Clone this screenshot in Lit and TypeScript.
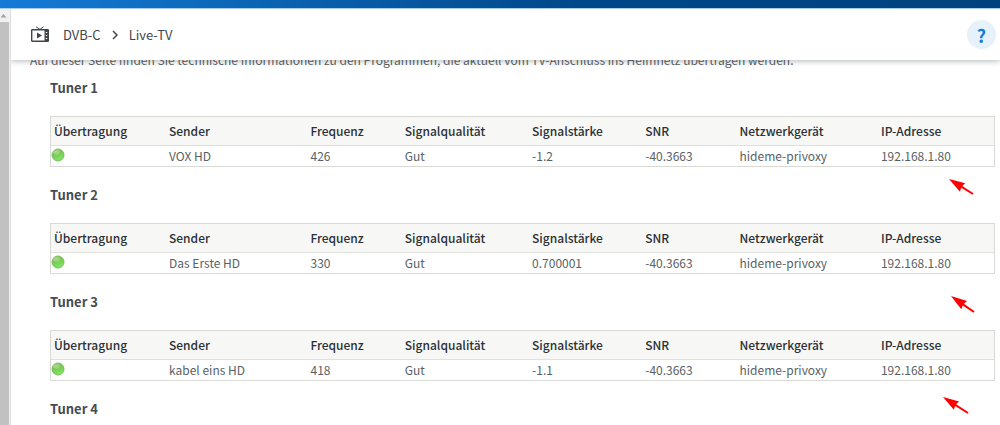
import { LitElement, html, css, svg } from "lit";
import { customElement, property } from "lit/decorators.js";
import { styleMap } from "lit/directives/style-map.js";

interface Tuner {
  name: string;
  row?: string[];
  arrow?: { x: number; y: number; dx: number; dy: number };
}

const COLUMNS: [string, number][] = [
  ["Übertragung", 12.2],
  ["Sender", 15],
  ["Frequenz", 10],
  ["Signalqualität", 13.5],
  ["Signalstärke", 12],
  ["SNR", 10],
  ["Netzwerkgerät", 15],
  ["IP-Adresse", 12.3],
];

const TUNERS: Tuner[] = [
  {
    name: "Tuner 1",
    row: ["VOX HD", "426", "Gut", "-1.2", "-40.3663", "hideme-privoxy", "192.168.1.80"],
    arrow: { x: 46, y: 63, dx: 24, dy: 15 },
  },
  {
    name: "Tuner 2",
    row: ["Das Erste HD", "330", "Gut", "0.700001", "-40.3663", "hideme-privoxy", "192.168.1.80"],
    arrow: { x: 44, y: 73, dx: 23, dy: 16 },
  },
  {
    name: "Tuner 3",
    row: ["kabel eins HD", "418", "Gut", "-1.1", "-40.3663", "hideme-privoxy", "192.168.1.80"],
    arrow: { x: 52, y: 67, dx: 25, dy: 16 },
  },
  { name: "Tuner 4" },
];

@customElement("tuner-section")
class TunerSection extends LitElement {
  @property({ attribute: false }) tuner!: Tuner;

  static styles = css`
    :host {
      display: block;
    }
    .title {
      margin: 0;
      font-size: 13px;
      line-height: 20px;
      font-weight: 700;
      color: #454c52;
    }
    .wrap {
      position: relative;
      margin: 18px 0;
    }
    .grid {
      width: 100%;
      table-layout: fixed;
      border-collapse: separate;
      border-spacing: 0;
      border: 1px solid #d9dad6;
      box-sizing: border-box;
    }
    th,
    td {
      padding: 0 3px;
      text-align: left;
      white-space: nowrap;
      font-size: 12px;
    }
    th {
      height: 28px;
      background: #f7f7f5;
      border-bottom: 1px solid #dfe0dc;
      font-weight: 500;
      color: #2b3136;
      line-height: 20px;
    }
    td {
      height: 20px;
      line-height: 20px;
      color: #5a5f66;
    }
    .state {
      padding: 0;
    }
    .led {
      display: block;
      width: 14px;
      height: 14px;
      margin-bottom: 3px;
    }
    .arrow {
      position: absolute;
      overflow: visible;
    }
  `;

  private arrow() {
    const a = this.tuner.arrow;
    if (!a) return null;
    const angle = (Math.atan2(a.dy, a.dx) * 180) / Math.PI;
    const length = Math.hypot(a.dx, a.dy);
    return html`<svg
      class="arrow"
      width=${a.dx}
      height=${a.dy}
      style=${styleMap({ right: `${a.x - a.dx}px`, top: `${a.y}px` })}
      aria-hidden="true"
    >
      ${svg`<g transform="rotate(${angle})" fill="#f00">
        <path d="M0 0L16 -5L15 -1H${length}V1H15L16 5Z" />
      </g>`}
    </svg>`;
  }

  render() {
    const t = this.tuner;
    return html`
      <h2 class="title" id="title">${t.name}</h2>
      ${t.row
        ? html`<div class="wrap">
            <table class="grid" aria-labelledby="title">
              <colgroup>
                ${COLUMNS.map(([, w]) => html`<col style=${styleMap({ width: `${w}%` })} />`)}
              </colgroup>
              <thead>
                <tr>
                  ${COLUMNS.map(([label]) => html`<th scope="col">${label}</th>`)}
                </tr>
              </thead>
              <tbody>
                <tr>
                  <td class="state">
                    <svg class="led" viewBox="0 0 14 14" role="img" aria-label="aktiv">
                      <defs>
                        <linearGradient id="g" x1="0" y1="0" x2="0.4" y2="1">
                          <stop offset="0" stop-color="#b5d69b" />
                          <stop offset="0.45" stop-color="#78c552" />
                          <stop offset="1" stop-color="#7de765" />
                        </linearGradient>
                      </defs>
                      <circle cx="7" cy="7" r="6" fill="url(#g)" stroke="#79bd5b" />
                      <ellipse cx="5.6" cy="4.6" rx="3.2" ry="2.2" fill="#d3e8bd" opacity="0.4" />
                    </svg>
                  </td>
                  ${t.row.map((v) => html`<td>${v}</td>`)}
                </tr>
              </tbody>
            </table>
            ${this.arrow()}
          </div>`
        : null}
    `;
  }
}

@customElement("app-root")
class AppRoot extends LitElement {
  static styles = css`
    :host {
      display: flex;
      flex-direction: column;
      height: 100vh;
      overflow: hidden;
      background: #fff;
      color: #3f464c;
      font-family: "Noto Sans CJK SC", "Noto Sans", sans-serif;
    }
    .brand {
      flex: none;
      height: 8px;
      background: linear-gradient(90deg, #147bd6, #00488a 58%, #00427e);
      border-bottom: 1px solid #a9cbe8;
    }
    .body {
      flex: 1;
      display: flex;
      min-height: 0;
    }
    .scroll {
      flex: none;
      width: 9px;
      display: flex;
      flex-direction: column;
      background: #f1f1f1;
      border-right: 1px solid #f1f1f1;
    }
    .up {
      flex: none;
      width: 9px;
      height: 13px;
    }
    .thumb {
      flex: 1;
      background: #c1c1c1;
    }
    .page {
      flex: 1;
      min-width: 0;
      overflow: hidden;
      display: flex;
      flex-direction: column;
      border-left: 1px solid #dedede;
    }
    .head {
      flex: none;
      position: relative;
      z-index: 1;
      display: flex;
      align-items: center;
      height: 51px;
      padding: 0 4px 0 19px;
      background: #fff;
      box-shadow: 0 1px 6px rgba(60, 70, 75, 0.4);
    }
    .tv {
      width: 20px;
      height: 18px;
    }
    .crumbs {
      flex: 1;
      display: flex;
      align-items: center;
      gap: 11px;
      margin-left: 13px;
      font-size: 13px;
      line-height: 20px;
    }
    .crumbs a {
      color: inherit;
      text-decoration: none;
    }
    .chev {
      width: 6px;
      height: 10px;
    }
    .help {
      width: 29px;
      height: 29px;
      padding: 0;
      border: 0;
      border-radius: 50%;
      background: #e6f1fa;
      color: #147bd6;
      font: 700 18px/26px "Noto Sans CJK SC", sans-serif;
    }
    .content {
      flex: 1;
      min-height: 0;
      overflow: hidden;
      padding: 0 5px 0 19px;
    }
    .intro {
      margin: -10px 0 0;
      font-size: 12px;
      line-height: 20px;
      color: #5a5f66;
    }
    .tuners {
      margin: 8px 0 0 20px;
    }
  `;

  render() {
    return html`
      <div class="brand"></div>
      <div class="body">
        <div class="scroll" aria-hidden="true">
          <svg class="up" viewBox="0 0 9 13"><path d="M0.5 8.5L3.5 5L6.5 8.5Z" fill="#a3a3a3" /></svg>
          <div class="thumb"></div>
        </div>
        <div class="page">
          <header class="head">
            <svg class="tv" viewBox="0 0 20 18" fill="none" stroke="#3f464c" aria-hidden="true">
              <path d="M6 0.8L10 3.4L13.5 0.8" stroke-width="1" />
              <rect x="1.7" y="3.7" width="16.6" height="11.6" rx="0.6" stroke-width="1.4" />
              <path d="M14.5 3.5H18.5V15.5H14.5Z" fill="#3f464c" stroke="none" />
              <path d="M7 6.5L12 9.5L7 12.5Z" fill="#3f464c" stroke="none" />
              <path d="M15.8 6.5H17.2M15.8 9.5H17.2M15.8 12.5H17.2" stroke="#fff" stroke-width="1.2" />
            </svg>
            <nav class="crumbs" aria-label="Navigation">
              <a href="#dvbc">DVB-C</a>
              <svg class="chev" viewBox="0 0 6 10" aria-hidden="true">
                <path d="M1 1L5 5L1 9" fill="none" stroke="#3f464c" stroke-width="1.5" />
              </svg>
              <a href="#live">Live-TV</a>
            </nav>
            <button class="help" type="button" aria-label="Hilfe">?</button>
          </header>
          <main class="content">
            <p class="intro">
              Auf dieser Seite finden Sie technische Informationen zu den Programmen, die aktuell vom
              TV-Anschluss ins Heimnetz übertragen werden.
            </p>
            <div class="tuners">
              ${TUNERS.map((t) => html`<tuner-section .tuner=${t}></tuner-section>`)}
            </div>
          </main>
        </div>
      </div>
    `;
  }
}
